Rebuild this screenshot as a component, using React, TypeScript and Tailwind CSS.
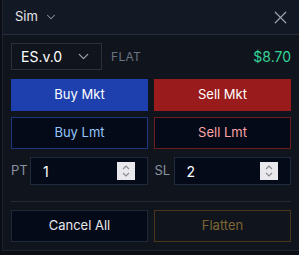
import { ChevronDown, X } from "lucide-react";

function Spinner() {
  return (
    <div className="w-[18px] h-[18px] bg-[#e9e9ed] flex flex-col items-center justify-center">
      <svg width="10" height="14" viewBox="0 0 10 14" fill="none" stroke="#8a8a8f" strokeWidth="1.2">
        <polyline points="2,5 5,2 8,5" />
        <polyline points="2,9 5,12 8,9" />
      </svg>
    </div>
  );
}

function NumField({ label, value }: { label: string; value: string }) {
  return (
    <div className="flex items-center flex-1">
      <span className="text-[13px] text-[#8b93a1] w-[19px] shrink-0">{label}</span>
      <div className="flex-1 h-[28px] bg-[#050a18] border border-[#1f2a3c] flex items-center justify-between pl-[12px] pr-[12px]">
        <span className="text-[14px] text-white">{value}</span>
        <Spinner />
      </div>
    </div>
  );
}

export default function App() {
  return (
    <div className="w-[299px] h-[255px] bg-[#0b0e14] overflow-hidden" style={{ fontFamily: "Inter, 'Noto Sans', sans-serif" }}>
      <div className="ml-[2px] h-[251px] bg-[#10141c] border-l border-b border-[#1d2430] flex flex-col">
        <div className="h-[35px] bg-[#131924] border-b border-[#252d3a] flex items-center justify-between pl-[12px] pr-[8px]">
          <div className="flex items-center gap-[6px]">
            <span className="text-[13px] text-[#e5e7eb]">Sim</span>
            <ChevronDown size={14} color="#8b93a1" strokeWidth={1.8} />
          </div>
          <X size={21} color="#9ca3af" strokeWidth={1.4} />
        </div>

        <div className="px-[8px] pt-[8px] flex flex-col">
          <div className="flex items-center h-[27px]">
            <div className="w-[91px] h-[27px] border border-[#2a313d] bg-[#10141c] flex items-center justify-between pl-[9px] pr-[9px]">
              <span className="text-[14px] text-white">ES.v.0</span>
              <ChevronDown size={17} color="#9ca3af" strokeWidth={1.8} />
            </div>
            <span className="ml-[9px] text-[12px] text-[#6b7280] tracking-wide">FLAT</span>
            <span className="ml-auto text-[14px] text-[#34d399]">$8.70</span>
          </div>

          <div className="grid grid-cols-2 gap-[6px] mt-[9px]">
            <div className="h-[32px] bg-[#1e40af] flex items-center justify-center text-[13px] text-white">Buy Mkt</div>
            <div className="h-[32px] bg-[#991b1b] flex items-center justify-center text-[13px] text-white">Sell Mkt</div>
          </div>

          <div className="grid grid-cols-2 gap-[6px] mt-[6px]">
            <div className="h-[32px] bg-[#050a18] border border-[#1e3580] flex items-center justify-center text-[13px] text-[#93c5fd]">Buy Lmt</div>
            <div className="h-[32px] bg-[#050a18] border border-[#6b1c1c] flex items-center justify-center text-[13px] text-[#fca5a5]">Sell Lmt</div>
          </div>

          <div className="flex gap-[7px] mt-[8px]">
            <NumField label="PT" value="1" />
            <NumField label="SL" value="2" />
          </div>

          <div className="h-px bg-[#222a36] mt-[16px]" />

          <div className="grid grid-cols-2 gap-[6px] mt-[8px]">
            <div className="h-[32px] bg-[#050a18] border border-[#1f2937] flex items-center justify-center text-[13px] text-[#e5e7eb]">Cancel All</div>
            <div className="h-[32px] bg-[#10141c] border border-[#4a3719] flex items-center justify-center text-[13px] text-[#7f6532]">Flatten</div>
          </div>
        </div>
      </div>
    </div>
  );
}
